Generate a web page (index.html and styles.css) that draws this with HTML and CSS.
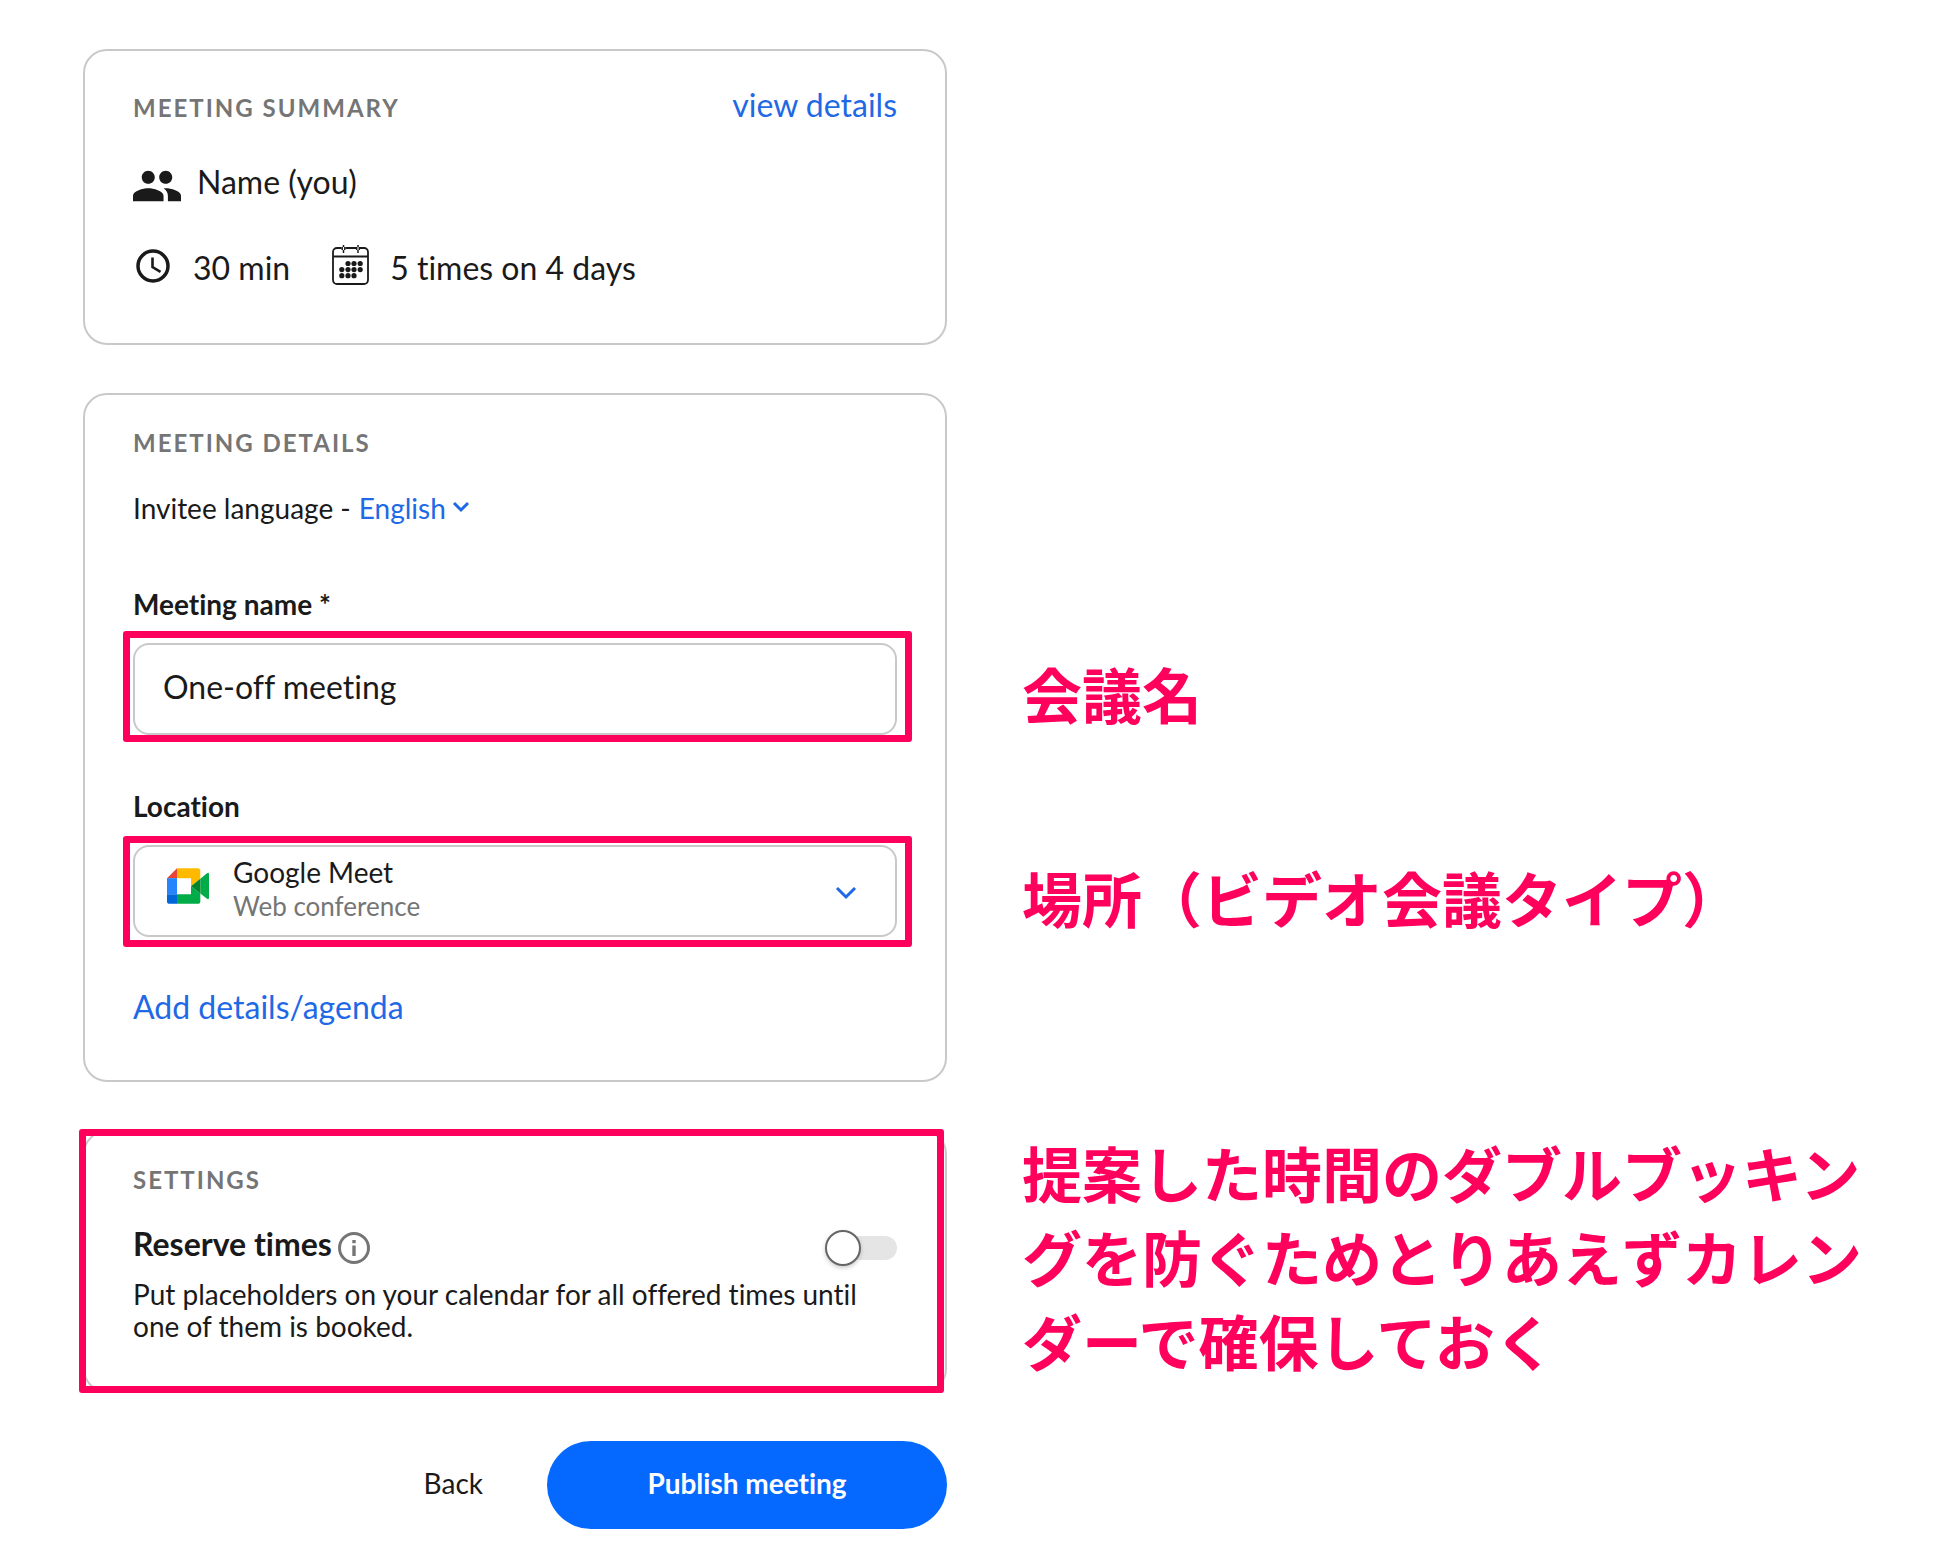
FILE: index.html
```
<!DOCTYPE html>
<html lang="en">

<head>
    <meta charset="UTF-8">
    <title>One-off meeting</title>
    <link rel="stylesheet" href="styles.css">
</head>

<body>
    <form class="page">
        <section class="card summary">
            <div class="card-header">
                <h2>MEETING SUMMARY</h2>
                <a href="#">view details</a>
            </div>
            <div class="host">
                <svg width="48" height="32" viewBox="1 5 22 14" fill="#1a1a1a">
                    <path d="M16 11c1.66 0 2.99-1.34 2.99-3S17.66 5 16 5s-3 1.34-3 3 1.34 3 3 3zm-8 0c1.66 0 2.99-1.34 2.99-3S9.66 5 8 5 5 6.34 5 8s1.34 3 3 3zm0 2c-2.33 0-7 1.17-7 3.5V19h14v-2.5c0-2.33-4.67-3.5-7-3.5zm8 0c-.29 0-.62.02-.97.05 1.16.84 1.97 1.97 1.97 3.45V19h6v-2.5c0-2.33-4.67-3.5-7-3.5z"/>
                </svg>
                <span>Name (you)</span>
            </div>
            <div class="schedule">
                <div class="schedule-item">
                    <svg width="40" height="40" viewBox="0 0 40 40" fill="none" stroke="#1a1a1a">
                        <circle cx="20" cy="18" r="15" stroke-width="3.5"/>
                        <path d="M19.5 9.5v9.5l8 4.8" stroke-width="2.6"/>
                    </svg>
                    <span>30 min</span>
                </div>
                <div class="schedule-item">
                    <svg width="40" height="40" viewBox="0 3 40 40" fill="none" stroke="#1a1a1a" stroke-width="1.8">
                        <rect x="3" y="3" width="35" height="36" rx="4"/>
                        <path d="M3 11.5h35"/>
                        <g stroke="#fff" stroke-width="4"><path d="M13.5 1v5M28 1v5"/></g>
                        <path d="M13.5 0v2M13.5 5v3M28 0v2M28 5v3M12.2 2v3M14.8 2v3M26.7 2v3M29.3 2v3" stroke-width="1.5"/>
                        <g fill="#1a1a1a" stroke="none">
                            <circle cx="18" cy="18.5" r="2.6"/><circle cx="24" cy="18.5" r="2.6"/><circle cx="30.2" cy="18.5" r="2.6"/>
                            <circle cx="11.8" cy="24.6" r="2.6"/><circle cx="18" cy="24.6" r="2.6"/><circle cx="24" cy="24.6" r="2.6"/><circle cx="30.2" cy="24.6" r="2.6"/>
                            <circle cx="11.8" cy="30.7" r="2.6"/><circle cx="18" cy="30.7" r="2.6"/><circle cx="24" cy="30.7" r="2.6"/>
                        </g>
                    </svg>
                    <span>5 times on 4 days</span>
                </div>
            </div>
        </section>

        <section class="card details">
            <h2>MEETING DETAILS</h2>
            <div class="language">
                <label for="language">Invitee language -</label>
                <select id="language">
                    <option>English</option>
                </select>
                <svg class="chevron" width="16" height="10" viewBox="0 0 16 10">
                    <path d="M1 1l7 7 7-7"/>
                </svg>
            </div>

            <label class="field-label" for="name">Meeting name *</label>
            <div class="control highlight highlight-name">
                <input type="text" id="name" value="One-off meeting">
            </div>

            <label class="field-label field-label-location" for="location">Location</label>
            <div class="control highlight highlight-location">
                <select id="location">
                    <option>Google Meet</option>
                </select>
                <svg class="meet-icon" width="42" height="36" viewBox="0 0 126 107">
                    <path fill="#ea4335" d="M0 30L30 0v30z"/>
                    <path fill="#ffba00" d="M30 0h62q8 0 8 8v24L72 54V30H30z"/>
                    <path fill="#2684fc" d="M0 30h30v48H0z"/>
                    <path fill="#0066da" d="M0 78h30v29H8q-8 0-8-8z"/>
                    <path fill="#00ac47" d="M30 78h42V54l28 22v23q0 8-8 8H30z"/>
                    <path fill="#00ac47" d="M100 32l20-17q6-4 6 3v71q0 7-6 3l-20-16z"/>
                    <path fill="#00832d" d="M72 54l28-22v44z"/>
                </svg>
                <span class="location-type">Web conference</span>
                <svg class="chevron" width="22" height="13" viewBox="0 0 22 13">
                    <path d="M2 2l9 9 9-9"/>
                </svg>
            </div>

            <a class="add-details" href="#">Add details/agenda</a>
        </section>

        <div class="notes notes-details" lang="ja">
            <p>会議名</p>
            <p>場所（ビデオ会議タイプ）</p>
        </div>

        <section class="card settings highlight">
            <h2>SETTINGS</h2>
            <div class="setting">
                <label for="reserve">Reserve times</label>
                <svg width="32" height="32" viewBox="0 0 32 32" fill="#757575">
                    <circle cx="16" cy="16" r="14.5" fill="none" stroke="#757575" stroke-width="3"/>
                    <rect x="14.3" y="8" width="3.4" height="3.2"/>
                    <rect x="14.3" y="13.5" width="3.4" height="10.5"/>
                </svg>
                <input type="checkbox" id="reserve" class="toggle">
            </div>
            <p>Put placeholders on your calendar for all offered times until one of them is booked.</p>
        </section>

        <div class="notes" lang="ja">
            <p>提案した時間のダブルブッキングを防ぐためとりあえずカレンダーで確保しておく</p>
        </div>

        <div class="actions">
            <button type="button" class="back">Back</button>
            <button type="submit" class="publish">Publish meeting</button>
        </div>
    </form>
</body>

</html>
```
FILE: styles.css
```
*,
*::before,
*::after {
    box-sizing: border-box;
}

body {
    margin: 0;
    background-color: #ffffff;
    color: #1a1a1a;
    font-family: Lato, "Noto Sans CJK JP", sans-serif;
    font-size: 28px;
    line-height: 32px;
    font-variant-ligatures: none;
}

h2,
p {
    margin: 0;
}

h2 {
    color: #757575;
    font-size: 24px;
    font-weight: 700;
    line-height: 28px;
    letter-spacing: 2px;
}

a {
    color: #1f69e6;
    font-size: 32px;
    line-height: 40px;
    text-decoration: none;
}

svg {
    flex-shrink: 0;
    overflow: visible;
}

input,
select,
button {
    margin: 0;
    font: inherit;
    color: inherit;
}

select {
    appearance: none;
    border: none;
    background: none;
    padding: 0;
}

.page {
    display: grid;
    grid-template-columns: minmax(0, 1fr) minmax(0, 1fr);
    gap: 48px 75px;
    padding: 49px 47px 32px 83px;
}

.card {
    grid-column: 1;
    padding: 34px 48px 55px;
    border: 2px solid #c9c9c9;
    border-radius: 24px;
}

.card-header {
    display: flex;
    justify-content: space-between;
    align-items: baseline;
}

/* summary */
.host,
.schedule,
.schedule-item {
    display: flex;
    align-items: center;
    font-size: 32px;
    line-height: 40px;
}

.host {
    align-items: flex-end;
    gap: 16px;
    margin-top: 37px;
}

.schedule {
    gap: 40px;
    margin-top: 46px;
}

.schedule-item {
    gap: 20px;
}

/* details */
.details {
    padding-bottom: 53px;
}

.language {
    display: flex;
    align-items: flex-start;
    margin-top: 35px;
}

.language select {
    height: 32px;
    margin-left: 8px;
    color: #1f69e6;
}

.language .chevron {
    margin: 10px 0 0 6px;
}

.chevron {
    fill: none;
    stroke: #1f69e6;
    stroke-width: 3;
    pointer-events: none;
}

.field-label {
    display: block;
    margin-top: 64px;
    font-weight: 700;
}

.field-label-location {
    margin-top: 55px;
}

.control {
    margin-top: 23px;
}

.control input,
.control select {
    display: block;
    width: 100%;
    height: 92px;
    border: 2px solid #c9c9c9;
    border-radius: 16px;
}

.control input {
    padding: 0 28px 6px;
    font-size: 32px;
}

.control select {
    padding: 0 72px 38px 98px;
}

.meet-icon {
    position: absolute;
    left: 34px;
    top: 23px;
    pointer-events: none;
}

.location-type {
    position: absolute;
    left: 100px;
    bottom: 15px;
    color: #757575;
    font-size: 26px;
    pointer-events: none;
}

.control .chevron {
    position: absolute;
    right: 40px;
    top: 41px;
}

.add-details {
    display: block;
    margin-top: 50px;
}

/* settings */
.settings {
    padding-bottom: 49px;
}

.setting {
    display: flex;
    align-items: flex-end;
    gap: 6px;
    margin: 30px 0 14px;
}

.setting label {
    font-size: 32px;
    font-weight: 700;
    line-height: 40px;
}

.toggle {
    appearance: none;
    position: relative;
    width: 72px;
    height: 24px;
    margin: 0 0 4px auto;
    border-radius: 12px;
    background-color: #e5e5e5;
}

.toggle::before {
    content: "";
    position: absolute;
    left: 0;
    top: -6px;
    width: 36px;
    height: 36px;
    border: 2px solid #666666;
    border-radius: 50%;
    background-color: #ffffff;
    box-shadow: 0 2px 4px rgba(0, 0, 0, 0.2);
}

.toggle:checked::before {
    left: 36px;
}

/* pink frames and notes */
.highlight {
    position: relative;
}

.highlight::after {
    content: "";
    position: absolute;
    border: 7px solid #ff005c;
    border-radius: 3px;
    pointer-events: none;
}

.highlight-name::after {
    inset: -12px -15px -7px -10px;
}

.highlight-location::after {
    inset: -9px -15px -10px -10px;
}

.settings::after {
    inset: -3px 1px -2px -6px;
}

.notes {
    grid-column: 2;
    color: #ff005c;
    font-family: "Noto Sans CJK JP", sans-serif;
    font-size: 60px;
    font-weight: 700;
    line-height: 84px;
}

.notes-details {
    display: flex;
    flex-direction: column;
    gap: 120px;
    padding-top: 258px;
}

/* buttons */
.actions {
    grid-column: 1;
    display: flex;
    justify-content: flex-end;
    gap: 64px;
}

.actions button {
    height: 88px;
    padding: 0 0 4px;
    border: none;
    cursor: pointer;
}

.back {
    background: none;
}

.publish {
    width: 400px;
    border-radius: 44px;
}

.actions .publish {
    background-color: #0569ff;
    color: #ffffff;
    font-weight: 700;
}
```
